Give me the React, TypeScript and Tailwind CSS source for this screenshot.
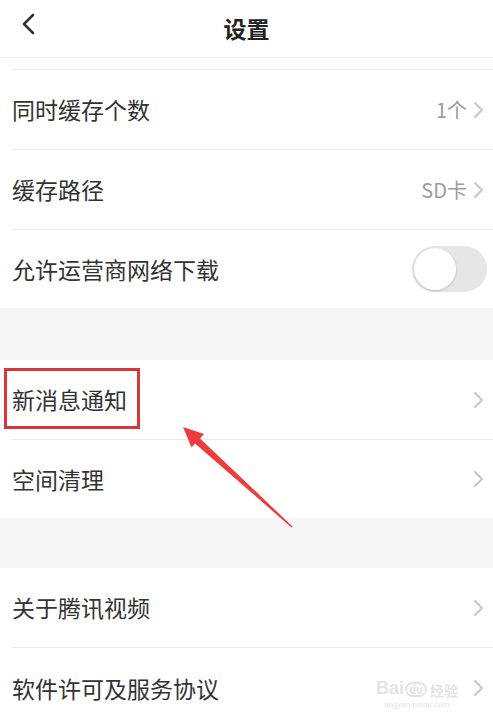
import { ReactNode } from "react";

const font = { fontFamily: '"Noto Sans CJK SC", "Noto Sans", sans-serif' };

function Chevron() {
  return (
    <svg width="12" height="18" viewBox="0 0 12 18" className="shrink-0">
      <path d="M2 2l7 7-7 7" fill="none" stroke="#c4c4c4" strokeWidth="1.8" strokeLinecap="round" strokeLinejoin="round" />
    </svg>
  );
}

function Row({
  label,
  value,
  right,
  last,
  h = "h-[80px]",
}: {
  label: ReactNode;
  value?: string;
  right?: ReactNode;
  last?: boolean;
  h?: string;
}) {
  return (
    <div className={`${h} flex items-stretch bg-white`}>
      <div className={`flex-1 ml-3 flex items-center justify-between pr-2 ${last ? "" : "border-b border-[#ececec]"}`}>
        <div className="text-[23px] text-[#333] leading-none">{label}</div>
        {right ?? (
          <div className="flex items-center gap-[6px]">
            {value && <span className="text-[20px] text-[#9c9c9c] leading-none">{value}</span>}
            <Chevron />
          </div>
        )}
      </div>
    </div>
  );
}

function Toggle() {
  return (
    <div className="w-[75px] h-[46px] rounded-full bg-[#e6e6e6] p-[2px] flex items-center mr-[-2px]">
      <div className="w-[42px] h-[42px] rounded-full bg-white shadow-[0_1px_3px_rgba(0,0,0,0.18)]" />
    </div>
  );
}

export default function App() {
  return (
    <div className="relative w-[493px] h-[722px] overflow-hidden bg-white" style={font}>
      {/* header */}
      <div className="h-[58px] flex items-center justify-center relative border-b border-[#efefef]">
        <svg width="16" height="22" viewBox="0 0 16 22" className="absolute left-[21px] top-[13px]">
          <path d="M12 2L3 11l9 9" fill="none" stroke="#333" strokeWidth="2.6" strokeLinecap="round" strokeLinejoin="round" />
        </svg>
        <span className="text-[23px] font-bold text-[#222] leading-none">设置</span>
      </div>
      <div className="h-[12px] flex">
        <div className="flex-1 ml-3 border-b border-[#ececec]" />
      </div>

      <Row label="同时缓存个数" value="1个" />
      <Row label="缓存路径" value="SD卡" />
      <Row label="允许运营商网络下载" right={<Toggle />} last h="h-[78px]" />

      <div className="h-[52px] bg-[#f5f5f5]" />

      <Row
        label={
          <span className="relative">
            新消息通知
            <span className="absolute left-[-8px] right-[-13px] top-[-14px] bottom-[-13px] border-[3px] border-[#d9363c]" />
          </span>
        }
      />
      <Row label="空间清理" last h="h-[78px]" />

      <div className="h-[50px] bg-[#f5f5f5]" />

      <Row label="关于腾讯视频" />
      <Row label="软件许可及服务协议" last />

      {/* watermark */}
      <div className="absolute left-[376px] top-[679px] flex flex-col items-center text-[#e4e4e4] leading-none pointer-events-none">
        <div className="flex items-end gap-[1px]">
          <span className="text-[18px] font-bold" style={{ fontFamily: '"Liberation Sans", sans-serif' }}>
            Bai
          </span>
          <span className="text-[11px] font-bold border-2 border-[#e4e4e4] rounded-full px-[2px]">du</span>
          <span className="text-[14px] font-bold ml-[2px]">经验</span>
        </div>
        <span className="text-[8px] mt-[4px]" style={{ fontFamily: '"Liberation Sans", sans-serif' }}>
          jingyan.baidu.com
        </span>
      </div>

      {/* annotation arrow */}
      <svg width="493" height="722" className="absolute inset-0 pointer-events-none">
        <polygon
          points="183,427 204,434 200,438.5 292.5,526.5 291.5,527.5 195,443.5 191.5,447.5"
          fill="#ee3b3b"
        />
      </svg>
    </div>
  );
}
